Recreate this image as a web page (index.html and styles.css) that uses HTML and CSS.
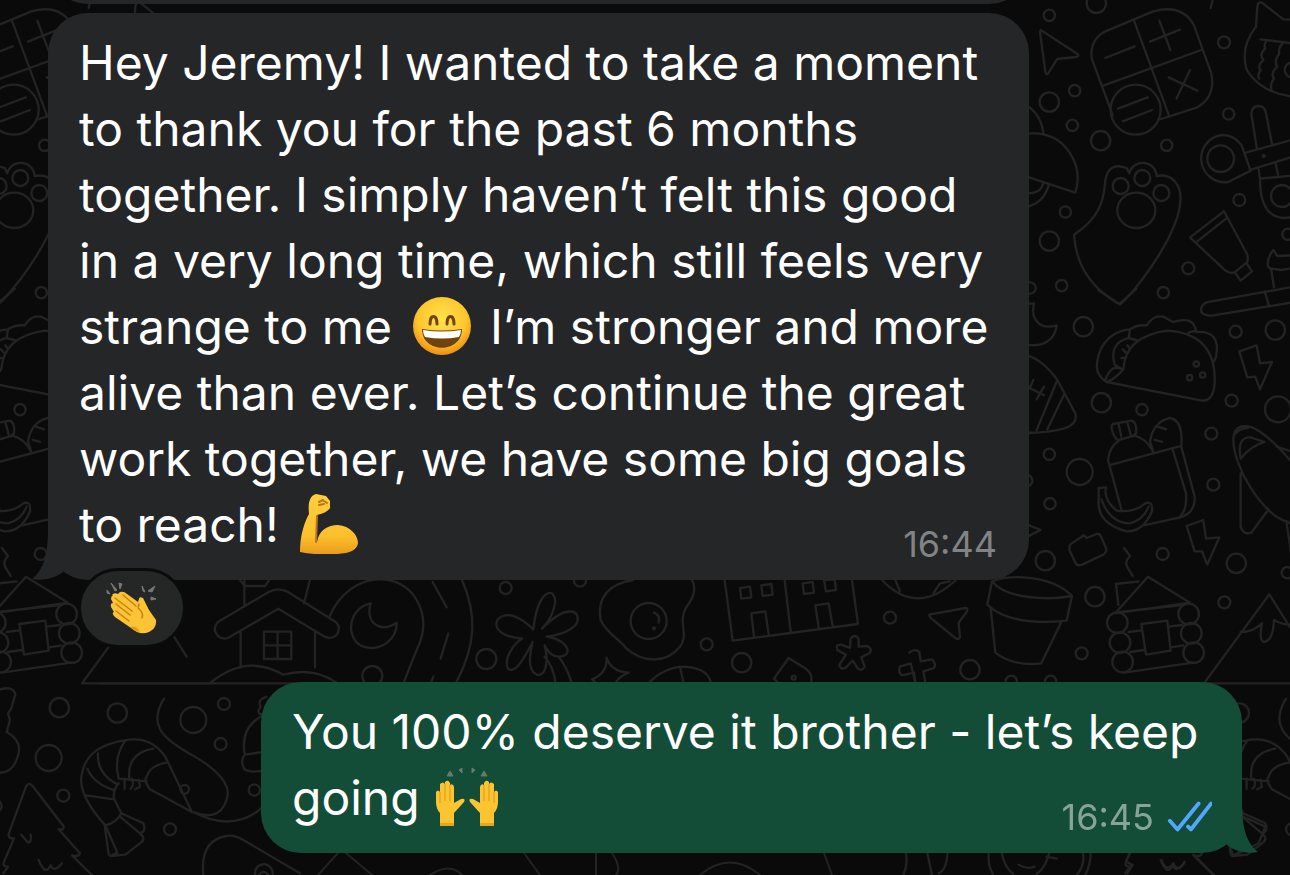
FILE: index.html
```html
<!DOCTYPE html>
<html lang="en">
<head>
    <meta charset="UTF-8">
    <meta name="viewport" content="width=device-width, initial-scale=1.0">
    <title>Chat</title>
    <link rel="stylesheet" href="styles.css">
</head>
<body>
    <!-- Wallpaper doodles, the tile repeats every 1122 units -->
    <svg class="wallpaper" viewBox="0 0 1290 875" preserveAspectRatio="xMinYMin slice" aria-hidden="true">
        <defs>
            <g id="doodles-side">
                <g transform="translate(1020 0) scale(.3333)">
                    <!-- cursor, calculator -->
                    <path d="M62 90L174 163Q178 170 168 171L112 177L84 221Q77 226 76 216L60 96Z"/>
                    <path d="M278 345L216 178Q206 122 256 94L400 34Q486 10 522 76L574 220Q588 290 532 322L414 360M342 62L448 350M252 256L544 150M256 174L344 139M390 125L480 89M418 62L451 150M446 232L532 272M510 210L470 295M294 326L383 292M308 364L396 330"/>
                    <circle cx="347" cy="329" r="75"/>
                    <!-- umbrella and plate -->
                    <path d="M10 310Q64 340 70 400M0 404Q110 384 156 470Q184 520 166 578L20 530M24 580Q64 580 70 548M20 620Q70 610 86 556"/>
                    <!-- paw -->
                    <path d="M278 900Q170 830 162 704C240 654 252 600 256 540Q266 484 320 504L328 520C340 474 406 480 410 528C450 520 490 548 480 614C470 700 380 830 315 900L300 914Z"/>
                    <circle cx="302" cy="558" r="24"/><circle cx="367" cy="534" r="24"/><circle cx="424" cy="579" r="24"/>
                    <ellipse cx="349" cy="631" rx="57" ry="53"/>
                    <!-- cat -->
                    <path d="M850 60L790 58L726 8Q714 4 712 20L708 80Q660 140 680 210Q730 290 850 292M722 118L850 134M740 122Q730 135 736 145Q716 165 730 180Q710 200 722 210Q710 228 718 236M788 130Q774 145 778 160Q760 185 772 200Q750 220 762 235Q748 255 756 272"/>
                    <circle cx="816" cy="210" r="22"/>
                    <!-- pacifier -->
                    <path d="M710 442L694 340Q696 318 716 318Q736 320 738 340L756 432M678 458L850 410M690 510L850 460M664 434Q640 404 605 405A71 71 0 1 0 625 546L692 512L664 434M716 508L720 536L850 524M720 536Q720 650 790 654L850 650M766 486L774 524"/>
                    <circle cx="602" cy="476" r="40"/><circle cx="731" cy="468" r="3"/><circle cx="786" cy="588" r="33"/>
                    <!-- tube -->
                    <path d="M612 634L510 712L612 808Q632 824 646 816L682 786Q686 766 678 756ZM618 656L532 724M646 820L662 842L696 814L680 790"/>
                    <!-- toothbrush -->
                    <path d="M850 765L772 768L760 750Q740 776 744 798L754 810L762 862M750 805L784 810L850 800M566 906L850 855M734 874L748 920M566 906Q540 912 544 936Q556 950 580 946L850 902"/>
                    <circle cx="88" cy="46" r="17"/><circle cx="229" cy="10" r="29"/><circle cx="612" cy="127" r="18"/><circle cx="164" cy="272" r="17"/><circle cx="88" cy="306" r="29"/><circle cx="157" cy="376" r="17"/><circle cx="242" cy="422" r="29"/><circle cx="440" cy="436" r="17"/><circle cx="626" cy="342" r="17"/><circle cx="658" cy="600" r="18"/><circle cx="136" cy="636" r="17"/><circle cx="88" cy="723" r="29"/><circle cx="125" cy="857" r="17"/><circle cx="30" cy="864" r="17"/><circle cx="505" cy="805" r="18"/><circle cx="430" cy="878" r="17"/><circle cx="804" cy="703" r="17"/>
                    <path d="M578 0L572 24"/>
                </g>
                <g transform="translate(1020 290) scale(.3333)">
                    <!-- moon, football -->
                    <path d="M20 42L42 40C30 90 60 120 110 106C105 150 70 172 20 164M20 196Q70 210 112 270L166 370Q174 404 130 416Q80 430 20 428M112 270L50 420M134 310L82 418M24 292L72 316M40 270L28 296M72 290L50 328"/>
                    <!-- taco -->
                    <path d="M260 276Q224 254 232 214C240 150 290 120 330 118Q350 104 380 106Q400 74 430 80L460 96Q524 76 528 126Q604 120 588 200L582 214M260 276Q290 264 310 238Q316 140 440 122Q590 130 584 280Q580 334 546 332L260 276M330 118L326 144Q350 150 354 152M326 144Q266 160 284 224L306 238M256 270Q274 220 306 238M304 204L316 204M308 178L318 188M322 166L330 176M505 128L528 122"/>
                    <circle cx="529" cy="222" r="8"/><circle cx="509" cy="263" r="8"/><circle cx="548" cy="255" r="8"/>
                    <!-- lightning -->
                    <path d="M658 184L710 166L720 220L756 216L720 298L706 260L682 262ZM500 708L550 690L558 746L598 742L562 824L546 784L524 784Z"/>
                    <!-- lunch bag -->
                    <path d="M304 658L264 510Q268 470 296 452L288 446Q268 414 278 402L336 392Q352 400 348 430L340 436Q380 444 400 486L390 454Q400 396 450 384Q490 390 484 470L524 620Q526 670 480 682L372 706M274 524L484 468M458 478L498 610Q502 660 480 680M298 450L346 436M296 402L304 440M322 396L332 434M414 410L438 418M404 450L426 456"/>
                    <path d="M236 594L258 592Q250 630 290 662Q340 670 376 640Q400 632 396 664Q370 726 320 724Q230 700 236 630ZM244 628Q270 700 330 700Q370 690 386 650"/>
                    <!-- shoe -->
                    <path d="M640 450Q640 400 690 410Q750 430 850 560M640 450C640 530 730 680 804 696L850 730M662 506Q650 440 692 442L734 456Q690 470 662 506M648 430Q660 414 684 414M662 550L662 710Q670 736 694 728L746 658M770 470L850 496M800 700L815 800"/>
                    <path d="M150 764L192 736L200 744L230 732Q240 730 244 742L258 774Q262 786 250 794L186 824Q172 830 166 818L148 780ZM312 774L330 798Q310 818 326 838L338 858M22 704L62 720L22 740"/>
                    <path d="M235 0L298 42L350 -4"/>
                    <circle cx="190" cy="110" r="29"/><circle cx="647" cy="125" r="18"/><circle cx="766" cy="120" r="29"/><circle cx="244" cy="338" r="29"/><circle cx="366" cy="359" r="17"/><circle cx="635" cy="332" r="18"/><circle cx="774" cy="358" r="39"/><circle cx="574" cy="431" r="18"/><circle cx="88" cy="493" r="17"/><circle cx="179" cy="546" r="39"/><circle cx="90" cy="641" r="17"/><circle cx="580" cy="584" r="18"/><circle cx="76" cy="812" r="29"/><circle cx="428" cy="792" r="18"/><circle cx="649" cy="820" r="29"/><circle cx="802" cy="848" r="17"/><circle cx="20" cy="572" r="17"/>
                </g>
                <g transform="translate(900 560) scale(.3333)">
                    <!-- log cabin -->
                    <path d="M655 135L648 72L716 64M646 160L744 50L870 128ZM660 156L846 135M686 216L724 211M806 200L846 195M690 276L732 270M814 262L850 256M672 338L880 308M724 192L802 182L812 272L738 284Z"/>
                    <circle cx="652" cy="188" r="31"/><circle cx="660" cy="248" r="31"/><circle cx="668" cy="306" r="31"/><circle cx="866" cy="162" r="31"/><circle cx="874" cy="220" r="31"/><circle cx="881" cy="278" r="31"/>
                    <!-- mountain -->
                    <path d="M1300 370H912L1108 103L1226 290M1022 216Q1060 216 1086 190C1080 220 1080 246 1094 246Q1120 240 1122 180Q1150 196 1180 194"/>
                    <circle cx="973" cy="127" r="18"/>
                </g>
            </g>
            <g id="doodles-low" transform="translate(0 560) scale(.3333)">
                <!-- shrimp -->
                <path d="M326 884L314 794Q230 700 246 640Q260 560 370 542Q450 524 496 590L576 756L450 688Q430 660 440 650Q450 616 500 608M356 670Q338 690 342 716L364 760Q350 790 314 796M356 656Q340 590 376 542M388 656Q380 580 460 566M350 672Q290 640 294 580M340 690Q280 670 262 626M258 706L342 718M358 656L440 664M364 760L430 790Q440 815 420 820L360 770M420 820Q440 838 420 850L376 884L330 888L352 878L316 796M374 656L374 686M396 656Q404 676 392 686M416 660L420 680L406 688"/>
                <path d="M492 416C440 500 500 540 560 576Q680 640 684 700Q670 790 580 756Q700 820 790 740"/>
                <circle cx="554" cy="688" r="13"/>
                <!-- tree -->
                <path d="M10 940L24 920Q4 922 14 900L42 836Q20 836 28 816L78 680Q86 664 98 678L190 798Q194 812 176 808L240 880Q236 892 216 886L276 945M64 824L84 848Q96 846 92 824M116 900Q136 950 152 916Q162 940 186 910"/>
                <path d="M-20 396Q40 370 46 404L38 430L34 445L24 460L30 480L20 516Q64 540 56 580Q40 650 -20 636"/>
                <circle cx="178" cy="443" r="29"/><circle cx="352" cy="459" r="29"/><circle cx="580" cy="480" r="39"/><circle cx="672" cy="432" r="18"/><circle cx="662" cy="552" r="18"/><circle cx="146" cy="594" r="39"/><circle cx="190" cy="707" r="18"/><circle cx="510" cy="808" r="18"/><circle cx="763" cy="690" r="17"/><circle cx="-12" cy="738" r="17"/>
                <path d="M800 410Q770 420 782 440Q766 460 790 466Q720 500 734 584Q720 600 732 626Q750 642 800 630M736 584L800 574"/>
                <path d="M610 945Q600 840 680 828Q700 824 730 840L900 940M765 945Q764 914 794 912Q820 920 818 945M778 945Q790 926 804 944"/>
            </g>
        </defs>

        <use href="#doodles-side"/>
        <use href="#doodles-side" x="-1122"/>
        <use href="#doodles-low"/>
        <use href="#doodles-low" x="1122"/>

        <!-- strip between the two messages -->
        <g transform="translate(0 560) scale(.3333)">
            <path d="M722 218V322M945 218V322M792 215H874V297H792ZM833 215V297M792 256H874M835 146L684 234Q660 242 646 216Q640 196 660 182L806 96Q835 80 864 96L1004 184Q1024 198 1012 222Q996 240 974 230ZM733 60V136M720 60L735 78H795L808 60M632 368Q740 280 850 344Q940 320 1010 368M300 370H900M912 130L930 60"/>
        </g>
        <g transform="translate(290 570) scale(.3333)">
            <!-- road and moon -->
            <path d="M118 140C180 0 330 0 380 90Q420 160 380 240L342 335M516 30C560 130 560 220 500 335M428 36L470 112M475 190L452 266M430 320L424 335M242 100C170 116 166 210 220 230C274 246 322 206 320 158C270 190 226 160 242 100Z"/>
            <!-- flower -->
            <path d="M730 178C744 50 800 50 795 100Q790 140 756 176C830 100 876 120 860 160Q840 190 770 200C840 210 850 260 806 260Q780 260 764 226C780 290 760 320 740 314C710 300 720 250 728 216C690 290 670 310 654 296C640 270 670 220 696 206C640 200 610 180 622 150C650 120 690 140 730 178ZM764 260Q790 290 796 335M806 260Q830 290 844 335"/>
            <!-- egg -->
            <path d="M1030 30C960 40 920 80 932 150C950 190 980 200 1010 236C1060 280 1130 280 1170 230C1200 190 1160 160 1190 110Q1230 60 1200 20M1092 128Q1112 136 1106 158"/>
            <circle cx="1076" cy="153" r="54"/><circle cx="1092" cy="175" r="3"/>
            <path d="M950 264Q964 306 1016 308Q980 322 976 345M950 264Q952 310 906 328L920 340M1080 335Q1120 296 1170 290L1180 335M1170 290Q1250 290 1262 335"/>
            <circle cx="647" cy="54" r="18"/><circle cx="870" cy="32" r="18"/><circle cx="589" cy="267" r="30"/><circle cx="247" cy="318" r="30"/>
        </g>
        <g transform="translate(680 570) scale(.3333)">
            <path d="M134 30L158 212L534 162L516 30M314 30L332 186M222 200L214 130L256 124L266 194M416 172L406 106L446 100L458 168M180 54L210 50L214 82L184 86ZM244 46L274 42L278 74L248 78ZM368 40L398 36L402 68L372 72ZM432 30L464 28L468 60L438 64Z"/>
            <path d="M606 30Q710 140 828 30M646 30L660 64M760 70L780 40L810 34"/>
            <path d="M748 134L856 114Q866 114 860 126L836 158L840 202Q836 212 826 204L750 142Z"/>
            <!-- flower pot -->
            <path d="M936 34L922 104C980 160 1080 160 1160 152L1176 78C1120 20 1000 10 936 34C980 90 1110 90 1176 78M932 114L946 248Q1000 290 1084 280L1144 156"/>
            <!-- asterisk, plus, tag -->
            <path d="M512 206Q524 190 536 206V230L562 228Q580 238 568 250L544 262L554 290Q548 304 534 296L518 272L496 294Q480 300 478 284L498 254L472 240Q466 222 484 224L510 234ZM688 248Q704 234 718 246L722 274L756 268Q770 282 762 294L730 304L736 338M706 338L702 308L666 316Q652 306 660 290L692 280ZM282 326L326 264L380 298Q398 314 394 335M282 326L294 338"/>
            <circle cx="341" cy="323" r="6"/><circle cx="630" cy="143" r="18"/><circle cx="80" cy="223" r="18"/><circle cx="185" cy="278" r="29"/><circle cx="870" cy="299" r="29"/><circle cx="994" cy="334" r="17"/><circle cx="1112" cy="334" r="17"/><circle cx="1205" cy="250" r="18"/><circle cx="1245" cy="80" r="29"/>
        </g>
        <!-- below the last message -->
        <g transform="translate(900 560) scale(.3333)">
            <path d="M16 870Q26 910 10 945M80 870L96 945M142 880Q140 930 116 940M266 870V900Q266 920 280 945M304 870Q310 920 340 942M356 914Q380 930 404 920M450 870Q440 920 410 942M440 890L470 896M546 870Q560 910 530 945M572 870Q574 910 556 945M690 880L678 905L698 915L682 940M784 900Q800 940 820 910Q836 940 854 905M880 884L940 945"/>
            <path d="M1030 770L1096 800L1076 850L1000 888L990 860"/>
        </g>
        <path d="M318 875L338 853M346 853L372 875M430 875Q450 862 462 875M524 853L540 875M596 853V875M612 853Q622 868 616 875M700 875Q730 850 760 875M824 853L832 875"/>
    </svg>

    <main class="chat">
        <div class="message incoming previous"></div>

        <div class="message incoming">
            <svg class="tail" viewBox="0 0 44 50" aria-hidden="true">
                <path d="M16 0C16 28 10 41 0 49C10 51 22 49 31 42L40 20Z"/>
            </svg>
            <p class="message-text">
                Hey Jeremy! I wanted to take a moment<br>
                to thank you for the past 6 months<br>
                together. I simply haven’t felt this good<br>
                in a very long time, which still feels very<br>
                strange to me
                <svg class="emoji" viewBox="0 0 60 60" role="img" aria-label="Grinning face">
                    <defs>
                        <radialGradient id="face" cx=".5" cy=".38" r=".64">
                            <stop offset="0" stop-color="#ffe34d"/>
                            <stop offset=".65" stop-color="#fdc62d"/>
                            <stop offset="1" stop-color="#ed8713"/>
                        </radialGradient>
                    </defs>
                    <circle cx="30" cy="30" r="29" fill="url(#face)"/>
                    <path d="M18 28C18 18 25 18 25 28M35 28C35 18 42 18 42 28" fill="none" stroke="#70430d" stroke-width="3" stroke-linecap="round"/>
                    <path d="M10 33Q30 36 50 33C50 58 10 58 10 33Z" fill="#70430d"/>
                    <path d="M11 34Q30 37 49 34Q49 38 47 41Q30 44 13 41Q11 38 11 34Z" fill="#fff"/>
                </svg>
                I’m stronger and more<br>
                alive than ever. Let’s continue the great<br>
                work together, we have some big goals<br>
                to reach!
                <svg class="emoji" viewBox="0 0 60 60" role="img" aria-label="Flexed biceps">
                    <defs>
                        <linearGradient id="arm" x2="0" y2="1">
                            <stop offset="0" stop-color="#ffce3e"/>
                            <stop offset=".7" stop-color="#fdc02c"/>
                            <stop offset="1" stop-color="#e99b1c"/>
                        </linearGradient>
                    </defs>
                    <path d="M1 58C1 42 5 29 10 20C9 10 10 2 17 0L27 2L31 7L31 14Q28 19 18 21L18 48C20 36 29 31 39 31C51 32 59 41 59 49C58 58 46 60 34 60Q14 61 1 58Z" fill="url(#arm)"/>
                    <path d="M18 22L17 48M20 8L24 6M20 11L25 10M25 7L28 9" fill="none" stroke="#b8761a" stroke-width="2" stroke-linecap="round"/>
                </svg>
            </p>
            <div class="message-info"><time>16:44</time></div>
            <button class="reaction" type="button" aria-label="Clapping hands reaction">
                <svg viewBox="0 0 52 52" aria-hidden="true">
                    <path d="M1 8L4 12L1 11ZM5 1L11 8L9 9ZM13 1L16 2L14 7ZM36 4L39 10L37 9ZM42 9L49 4L46 10ZM45 15L50 17L45 18Z" fill="#75787a" stroke="#75787a"/>
                    <path d="M6 13Q8 10 12 12L14 10Q18 9 21 12L32 20L33 17Q33 14 37 16L43 28L50 38Q51 46 43 50Q34 54 25 46L9 35Q5 31 8 30L5 25Q4 21 7 21L5 17Q5 14 7 13Z" fill="#fcc335"/>
                    <path d="M9 16L26 29M10 22L24 33M10 29L23 39M17 13L30 24M33 22L32 26Q38 31 36 36" fill="none" stroke="#c98210" stroke-width="1.500" stroke-linecap="round"/>
                    <path d="M24 45Q30 43 34 50Q28 49 24 45Z" fill="#e79b17"/>
                </svg>
            </button>
        </div>

        <div class="message outgoing">
            <svg class="tail" viewBox="0 0 44 50" aria-hidden="true">
                <path d="M16 0C16 28 10 41 0 49C10 51 22 49 31 42L40 20Z"/>
            </svg>
            <p class="message-text">
                You 100% deserve it brother - let’s keep<br>
                going
                <svg class="emoji" viewBox="0 0 64 60" role="img" aria-label="Raising hands">
                    <path d="M12 9L15 4L18 9ZM24 3L27 1V6ZM37 1L40 3L37 6ZM46 9L49 4L52 9Z" fill="#667b70" stroke="#667b70"/>
                    <defs>
                        <g id="hand">
                            <path d="M5 59L5 46Q1 42 1 35V25Q3 22 5 25V17Q8 14 10 17V15Q13 12 15 16V18Q18 16 19 20V36L26 32Q31 31 29 35L19 46V59Z" fill="#fdc432"/>
                            <path d="M5 25V36M10 17V34M15 18V34" fill="none" stroke="#dd951b" stroke-width="1"/>
                            <path d="M5 56H19V59H5Z" fill="#eaa51f"/>
                        </g>
                    </defs>
                    <use href="#hand"/>
                    <use href="#hand" transform="translate(64 0) scale(-1 1)"/>
                </svg>
            </p>
            <div class="message-info">
                <time>16:45</time>
                <svg class="ticks" viewBox="0 0 48 32" role="img" aria-label="Read">
                    <path d="M4 20L12 29L34 2M23 26L26 29L47 2"/>
                </svg>
            </div>
        </div>
    </main>
</body>
</html>
```

FILE: styles.css
```css
* {
    box-sizing: border-box;
}

body {
    margin: 0;
    background-color: #0a0a0a;
    color: white;
    font-family: Inter, "Liberation Sans", sans-serif;
    overflow: hidden;
}

.wallpaper {
    position: fixed;
    top: 0;
    left: 0;
    width: 100%;
    height: 100%;
    z-index: -1;
    fill: none;
    stroke: #232323;
    stroke-width: 2;
    stroke-linecap: round;
    stroke-linejoin: round;
}

.wallpaper g[transform] {
    stroke-width: 7;
}

.chat {
    height: 100vh;
    padding: 0 48px 22px;
    display: flex;
    flex-direction: column;
    justify-content: flex-end;
}

.message {
    position: relative;
    flex-shrink: 0;
    width: 84%;
    max-width: 981px;
    padding: 17px 31px 22px;
    border-radius: 40px;
}

.message.incoming {
    align-self: flex-start;
    background-color: #242628;
    color: #242628;
    margin-bottom: 102px;
}

.message.outgoing {
    align-self: flex-end;
    background-color: #144d37;
    color: #144d37;
}

.message.previous {
    height: 84px;
    margin-bottom: 9px;
}

.message-text {
    margin: 0;
    font-size: 48px;
    line-height: 66px;
    color: white;
    white-space: nowrap;
}

.message-info {
    position: absolute;
    right: 32px;
    bottom: 14px;
    display: flex;
    align-items: center;
    gap: 12px;
    font-size: 36px;
    line-height: 44px;
    color: #818385;
}

.outgoing .message-info {
    right: 30px;
    color: #86a497;
}

.ticks {
    width: 46px;
    height: 32px;
    fill: none;
    stroke: #53a6fd;
    stroke-width: 4;
    stroke-linecap: round;
    stroke-linejoin: round;
}

.tail {
    position: absolute;
    left: -16px;
    bottom: 0;
    width: 44px;
    height: 50px;
    fill: currentColor;
}

.outgoing .tail {
    left: auto;
    right: -16px;
    transform: scaleX(-1);
}

.emoji {
    height: 60px;
    margin: 0 4px 0 7px;
    vertical-align: -12px;
}

.outgoing .emoji {
    margin: 0 2px;
}

.reaction {
    position: absolute;
    left: 30px;
    bottom: -68px;
    width: 108px;
    height: 80px;
    padding: 0;
    display: flex;
    align-items: center;
    justify-content: center;
    background-color: #242726;
    border: 3px solid #0a0b0b;
    border-radius: 40px;
    cursor: pointer;
}

.reaction svg {
    width: 52px;
    height: 52px;
}
```
